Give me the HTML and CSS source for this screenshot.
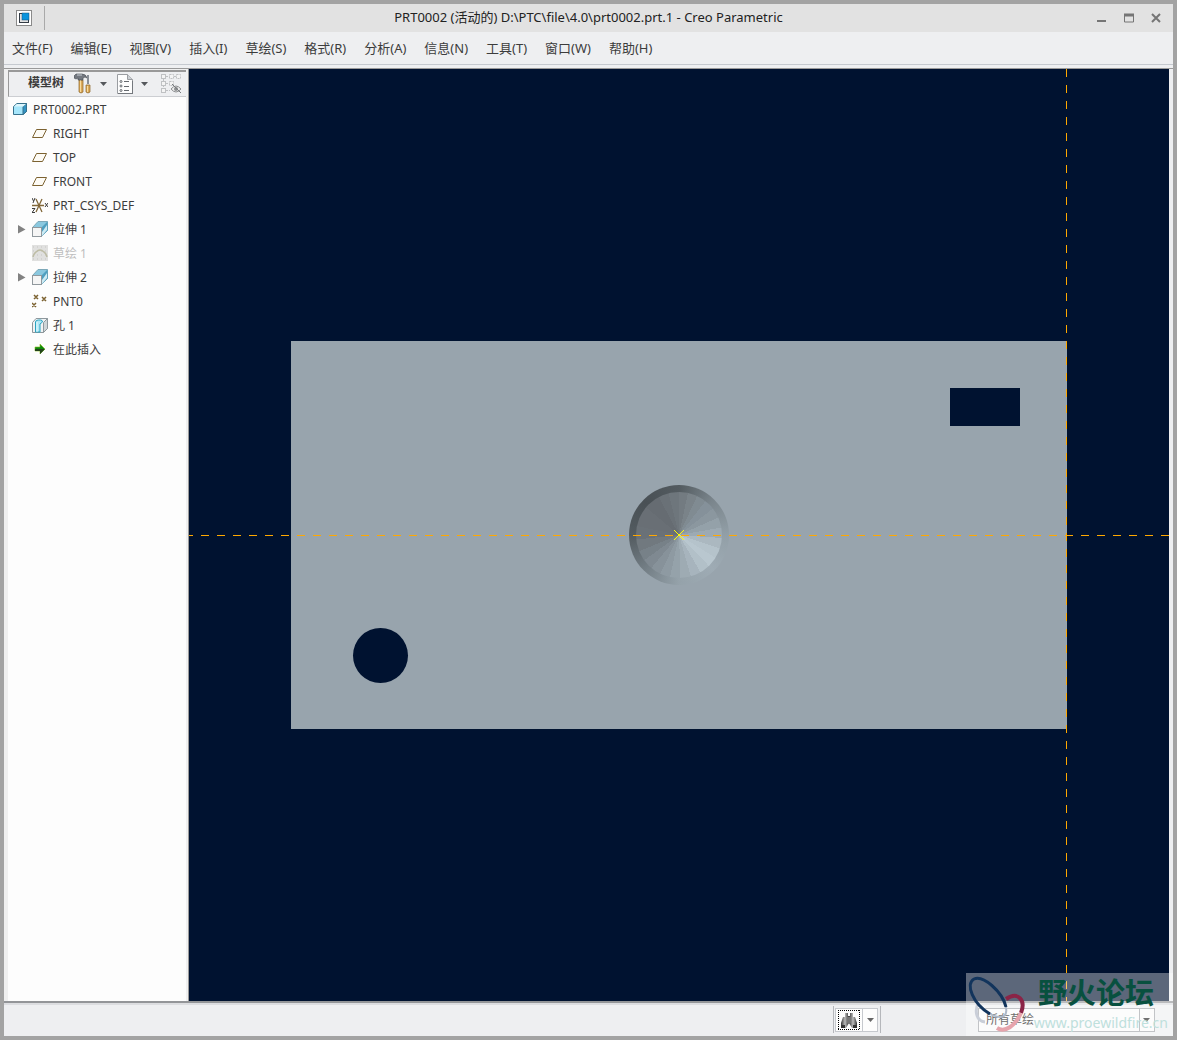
FILE: index.html
```
<!DOCTYPE html>
<html lang="zh-CN">

<head>
    <meta charset="UTF-8">
    <meta name="viewport" content="width=device-width, initial-scale=1.0">
    <title>PRT0002 - Creo Parametric</title>
    <link rel="stylesheet" href="styles.css">
</head>

<body>
    <div class="window">

        <header class="titlebar">
            <div class="app">
                <svg class="icon" width="16" height="16" viewBox="0 0 16 16">
                    <rect x="0.5" y="0.5" width="15" height="15" fill="#fff" stroke="#8a8a8a" />
                    <rect x="3.5" y="3.5" width="9" height="9" fill="#e2e2e2" stroke="#333b45" />
                    <rect x="6" y="3" width="7" height="7" fill="#0a94dd" stroke="#1b4f78" stroke-width="0.5" />
                </svg>
            </div>
            <h1 class="title">PRT0002 (活动的) D:\PTC\file\4.0\prt0002.prt.1 - Creo Parametric</h1>
            <div class="winbuttons">
                <button aria-label="最小化"><svg width="10" height="10" viewBox="0 0 10 10"><path d="M0 8h9" stroke="#757575" stroke-width="2" /></svg></button>
                <button aria-label="最大化"><svg width="10" height="10" viewBox="0 0 10 10"><path d="M.5 1v8h9V1" fill="none" stroke="#757575" /><path d="M0 2h10" stroke="#757575" stroke-width="3" /></svg></button>
                <button aria-label="关闭"><svg width="10" height="10" viewBox="0 0 10 10"><path d="M1 1l8 8M9 1l-8 8" stroke="#757575" stroke-width="2" /></svg></button>
            </div>
        </header>

        <nav class="menubar">
            <button>文件(F)</button>
            <button>编辑(E)</button>
            <button>视图(V)</button>
            <button>插入(I)</button>
            <button>草绘(S)</button>
            <button>格式(R)</button>
            <button>分析(A)</button>
            <button>信息(N)</button>
            <button>工具(T)</button>
            <button>窗口(W)</button>
            <button>帮助(H)</button>
        </nav>

        <main class="main">
            <aside class="sidebar">
                <div class="treebar">
                    <h2>模型树</h2>
                    <button class="drop" aria-label="设置">
                        <svg width="18" height="22" viewBox="0 0 18 22">
                            <path d="M5 7h4v12q-2 2-4 0z" fill="#dca95a" stroke="#8b6425" stroke-width="0.7" />
                            <path d="M6.5 7v12" stroke="#f8dc9e" />
                            <path d="M0 3l2-2h6q4 0 5 4l-2-1-2 1v2H4V5L2 6 0 5z" fill="#737880" stroke="#454950" stroke-width="0.6" />
                            <path d="M3 2h5" stroke="#c9ced4" />
                            <path d="M13 2h2v9h-2z" fill="#888e96" />
                            <path d="M12 12h4v7q-2 2-4 0z" fill="#dca95a" stroke="#8b6425" stroke-width="0.7" />
                            <path d="M13.5 13v6" stroke="#f8dc9e" />
                        </svg>
                        <svg class="caret" width="7" height="4" viewBox="0 0 7 4"><path d="M0 0h7L3.500 4z" fill="#55585c" /></svg>
                    </button>
                    <button class="drop" aria-label="显示">
                        <svg width="16" height="20" viewBox="0 0 16 20">
                            <path d="M.5.500h10l5 5v14H.500z" fill="#fdfdfd" stroke="#9a9da1" />
                            <path d="M10.500.500v5h5" fill="#ccd0d4" stroke="#9a9da1" />
                            <path d="M1 19.500h15M15.500 7v12" stroke="#74787d" />
                            <g fill="none" stroke="#65696e">
                                <circle cx="4" cy="7.500" r="1" />
                                <circle cx="4" cy="12" r="1" />
                                <circle cx="4" cy="16.500" r="1" />
                                <path d="M7 7.500h5M7 12.500h5M7 16.500h5" />
                            </g>
                        </svg>
                        <svg class="caret" width="7" height="4" viewBox="0 0 7 4"><path d="M0 0h7L3.500 4z" fill="#55585c" /></svg>
                    </button>
                    <button class="hide" aria-label="隐藏" disabled>
                        <svg width="20" height="20" viewBox="0 0 20 20">
                            <g fill="#f4f4f4" stroke="#bfc1c3">
                                <path d="M2.500 5v10M5 2.500h4M5 9.500h4M5 16.500h4M13 2.500h2" stroke-dasharray="2 1" />
                                <rect x=".5" y=".5" width="4" height="4" />
                                <rect x=".5" y="7.500" width="4" height="4" />
                                <rect x=".5" y="14.500" width="4" height="4" />
                                <path d="M8.500.500h4v4h-4zM15.500.500h4v4h-4zM8.500 7.500h4v4h-4z" stroke-dasharray="2 1" />
                            </g>
                            <path d="M10 15q5-6 10 0-5 6-10 0z" fill="#ececec" stroke="#8d8f91" />
                            <circle cx="15" cy="15" r="2" fill="#8d8f91" />
                            <path d="M11 10l9 9" stroke="#777a7d" />
                        </svg>
                    </button>
                </div>

                <ul class="tree">
                    <li class="root">
                        <svg width="16" height="16" viewBox="0 0 16 16">
                            <path d="M1.500 5.500L5 2.500h9.500v8L11 13.500H1.500z" fill="#a6e6fb" stroke="#37718c" />
                            <path d="M11 5.500l3.500-3v8l-3.500 3z" fill="#3394c4" stroke="#37718c" />
                            <path d="M2 5.500L5 3h9l-3 2.500z" fill="#dcf6fd" />
                        </svg>
                        PRT0002.PRT
                    </li>
                    <li>
                        <svg width="16" height="16" viewBox="0 0 16 16"><path d="M4.500 4.500h10l-4 8H.500z" fill="#fdfbf5" stroke="#7c6231" /></svg>
                        RIGHT
                    </li>
                    <li>
                        <svg width="16" height="16" viewBox="0 0 16 16"><path d="M4.500 4.500h10l-4 8H.500z" fill="#fdfbf5" stroke="#7c6231" /></svg>
                        TOP
                    </li>
                    <li>
                        <svg width="16" height="16" viewBox="0 0 16 16"><path d="M4.500 4.500h10l-4 8H.500z" fill="#fdfbf5" stroke="#7c6231" /></svg>
                        FRONT
                    </li>
                    <li>
                        <svg width="16" height="16" viewBox="0 0 16 16">
                            <path d="M0 8.500h12M4 2l6 13M10 2L4 15" stroke="#82683a" stroke-width="1.300" fill="none" />
                            <path d="M0 1l1.500 3M3 1L1 6M0 11.500h3l-3 4h3M13 6l3 4M16 6l-3 4" stroke="#3d3d3d" fill="none" />
                        </svg>
                        PRT_CSYS_DEF
                    </li>
                    <li>
                        <svg class="expand" width="8" height="10" viewBox="0 0 8 10"><path d="M0 1v8.500l7.500-4z" fill="#828282" /></svg>
                        <svg width="16" height="16" viewBox="0 0 16 16">
                            <path d="M.5 6.500L6 .500h9.500v9L9.500 15.500v-9z" fill="#8ac8df" stroke="#7da8b8" />
                            <path d="M9.500 6.500l6-6v9l-6 6z" fill="#4f9fc0" />
                            <path d="M10 15l5-6V4l-5 7z" fill="#cdebf4" />
                            <rect x=".5" y="6.500" width="9" height="9" fill="#f5f5f5" stroke="#90989d" />
                        </svg>
                        拉伸 1
                    </li>
                    <li class="off">
                        <svg width="16" height="16" viewBox="0 0 16 16">
                            <rect width="16" height="16" fill="#e0e0df" />
                            <path d="M1 2h15M1 6h15M1 10h15M1 14h15" stroke="#c5c5c2" stroke-dasharray="1 3" />
                            <path d="M1 12q1-4 3-5 4-4 8 0 2 1 3 5" fill="none" stroke="#bdbca5" stroke-width="1.500" />
                        </svg>
                        草绘 1
                    </li>
                    <li>
                        <svg class="expand" width="8" height="10" viewBox="0 0 8 10"><path d="M0 1v8.500l7.500-4z" fill="#828282" /></svg>
                        <svg width="16" height="16" viewBox="0 0 16 16">
                            <path d="M.5 6.500L6 .500h9.500v9L9.500 15.500v-9z" fill="#8ac8df" stroke="#7da8b8" />
                            <path d="M9.500 6.500l6-6v9l-6 6z" fill="#4f9fc0" />
                            <path d="M10 15l5-6V4l-5 7z" fill="#cdebf4" />
                            <rect x=".5" y="6.500" width="9" height="9" fill="#f5f5f5" stroke="#90989d" />
                        </svg>
                        拉伸 2
                    </li>
                    <li>
                        <svg width="16" height="16" viewBox="0 0 16 16"><path d="M2 2l4 4M6 2L2 6M10 4l4 4M14 4l-4 4M0 10l4 4M4 10l-4 4" stroke="#7c6231" stroke-width="1.500" /></svg>
                        PNT0
                    </li>
                    <li>
                        <svg width="16" height="16" viewBox="0 0 16 16">
                            <path d="M.5 5.500L4 1.500h11.500v10l-4 4H.500z" fill="#f1f3f4" stroke="#8e989d" />
                            <path d="M11.500 5.500l4-4v10l-4 4z" fill="#cfd5d8" stroke="#8e989d" />
                            <path d="M3.500 15V5q0-2 3-2h2q2 0 2 2L8 7v8z" fill="#aee6f5" stroke="#2aa2c0" />
                            <path d="M5 15V5" stroke="#e6fafd" />
                        </svg>
                        孔 1
                    </li>
                    <li>
                        <svg width="16" height="16" viewBox="0 0 16 16">
                            <path d="M3 6h5V3l5 5-5 5v-3H3z" fill="#0c8a0c" stroke="#8bbd22" stroke-width="0.600" />
                            <path d="M3 8h10l-5 5v-3H3z" fill="#23431a" />
                        </svg>
                        在此插入
                    </li>
                </ul>
            </aside>

            <section class="canvas">
                <div class="plate">
                    <div class="pocket"></div>
                    <div class="drill"></div>
                    <div class="hole">
                        <div class="cone"></div>
                    </div>
                    <div class="axis-v"></div>
                </div>
                <div class="axis-h"></div>
                <svg class="point" width="10" height="10" viewBox="0 0 10 10"><path d="M0 0l10 10M10 0L0 10" stroke="#ffff00" /></svg>
            </section>
        </main>

        <footer class="status">
            <div class="search">
                <button class="find" aria-label="查找">
                    <svg width="22" height="20" viewBox="0 0 22 20">
                        <defs>
                            <linearGradient id="tube">
                                <stop offset="0" stop-color="#333" />
                                <stop offset="0.500" stop-color="#bbb" />
                                <stop offset="1" stop-color="#333" />
                            </linearGradient>
                        </defs>
                        <path d="M0 .500h22M0 19.500h22M.5 0v20M21.500 0v20" stroke="#000" stroke-dasharray="1 1" />
                        <path d="M7 3h3v3h1v7l-3 5H3v-5l2-6h2z" fill="url(#tube)" />
                        <path d="M12 3h3v4h2l2 6v5h-5l-3-5V6h1z" fill="url(#tube)" />
                        <path d="M9 7h4v6H9z" fill="#777" />
                        <path d="M3 15h4v3H3zM15 15h4v3h-4z" fill="#333" />
                    </svg>
                </button>
                <button class="more" aria-label="更多">
                    <svg width="7" height="4" viewBox="0 0 7 4"><path d="M0 0h7L3.500 4z" fill="#666" /></svg>
                </button>
            </div>
            <div class="filter">
                <select aria-label="过滤器">
                    <option>所有草绘</option>
                </select>
                <svg width="7" height="4" viewBox="0 0 7 4"><path d="M0 0h7L3.500 4z" fill="#222" /></svg>
            </div>
        </footer>

        <!-- forum logo over the bottom right corner -->
        <div class="forum">
            <svg width="64" height="63" viewBox="0 0 64 63">
                <g fill="none">
                    <path d="M13 29c-5 8-3 19 6 20" stroke="#c9ced8" stroke-width="3" />
                    <path d="M20 39q12 7 18 4 4-3 1-13" stroke="#aeb9c9" stroke-width="2" />
                    <path d="M40 34C36 18 17 2 8 6-1 11 7 31 24 41" stroke="#12345c" stroke-width="3" />
                    <path d="M40 26c12-8 20 1 15 14" stroke="#8b2447" stroke-width="4" />
                    <path d="M55 40C49 53 39 60 31 55" stroke="#e6a4ac" stroke-width="4" />
                </g>
            </svg>
            <div class="forum-text">
                <strong>野火论坛</strong>
                <span>www.proewildfire.cn</span>
            </div>
        </div>

    </div>
</body>

</html>
```
FILE: styles.css
```
* {
    box-sizing: border-box;
}

body {
    margin: 0;
    font-family: "Noto Sans", "Noto Sans CJK SC", sans-serif;
    font-size: 12px;
    color: #3c3c3c;
}

button {
    display: flex;
    align-items: center;
    justify-content: center;
    padding: 0;
    border: 0;
    background: none;
    font: inherit;
    color: inherit;
}

svg {
    display: block;
    flex: none;
}

.window {
    position: relative;
    display: flex;
    flex-direction: column;
    height: 100vh;
    border: 4px solid #a3a3a3;
    background: #eeeff1;
}

/* title bar */

.titlebar {
    display: grid;
    grid-template-columns: 1fr auto 1fr;
    align-items: center;
    height: 28px;
    background: #e2e2e2;
}

.app {
    display: flex;
    align-items: center;
    width: 41px;
    height: 24px;
    padding-left: 12px;
    border-right: 1px solid #a9a9a9;
}

.title {
    margin: 0;
    padding-bottom: 2px;
    font-size: 13px;
    line-height: 20px;
    font-weight: normal;
    color: #222;
}

.winbuttons {
    display: flex;
    justify-content: flex-end;
    gap: 17px;
    padding-right: 12px;
}

/* menu */

.menubar {
    display: flex;
    gap: 18px;
    height: 33px;
    padding: 0 8px;
    border-bottom: 1px solid #c5c9cf;
    font-size: 13px;
    line-height: 20px;
}

.main {
    display: flex;
    flex: 1;
    min-height: 0;
    margin-top: 3px;
    padding-right: 4px;
    border-top: 1px solid #999;
    border-bottom: 2px solid #939598;
}

/* model tree */

.sidebar {
    width: 185px;
    padding: 1px 2px 0 4px;
    border-right: 1px solid #999;
    display: flex;
    flex-direction: column;
    background: #f0f0f0;
}

.treebar {
    display: flex;
    align-items: center;
    height: 27px;
    padding-left: 19px;
    border-top: 2px solid #999;
    border-left: 1px solid #999;
    border-bottom: 1px solid #ccced2;
    background: #eeeff1;
}

.treebar h2 {
    margin: 0 10px 0 0;
    padding-bottom: 2px;
    font-size: 12px;
    line-height: 20px;
}

.drop {
    gap: 8px;
    margin-right: 10px;
}

.hide {
    margin-left: 3px;
}

.tree {
    flex: 1;
    margin: 0;
    padding: 0;
    list-style: none;
    background: #fdfdfd;
}

.tree li {
    display: flex;
    align-items: center;
    gap: 5px;
    height: 24px;
    padding-left: 24px;
    white-space: nowrap;
}

.tree .root {
    padding-left: 4px;
}

.tree .expand {
    margin-left: -14px;
    margin-right: 1px;
}

.tree .off {
    color: #bdbdbd;
}

/* graphics area */

.canvas {
    position: relative;
    display: flex;
    flex: 1;
    align-items: center;
    justify-content: center;
    overflow: hidden;
    background: #001230;
}

.plate {
    position: relative;
    flex: none;
    width: 776px;
    height: 388px;
    background: #98a4ad;
}

.pocket {
    position: absolute;
    top: 47px;
    right: 47px;
    width: 70px;
    height: 38px;
    background: #001230;
}

.drill {
    position: absolute;
    left: 62px;
    bottom: 46px;
    width: 55px;
    height: 55px;
    border-radius: 50%;
    background: #001230;
}

.hole {
    position: absolute;
    top: 144px;
    left: 338px;
    width: 100px;
    height: 100px;
    padding: 7px;
    border-radius: 50%;
    background: conic-gradient(#535b60, #7b868d 45deg, #929fa7 90deg, #9eabb4 135deg, #95a2aa 180deg, #737e85 225deg, #535b60 270deg, #495055 315deg, #535b60);
}

.cone {
    height: 100%;
    border-radius: 50%;
    background: conic-gradient(#737b81 0 12deg, #7a8389 12deg 25deg, #808b92 25deg 38deg, #85919a 38deg 52deg, #8b979f 52deg 66deg, #94a1a9 66deg 80deg, #9daab3 80deg 94deg, #abb8c0 94deg 108deg, #b5c3cb 108deg 122deg, #b9c7cf 122deg 136deg, #b2c0c8 136deg 150deg, #a7b4bd 150deg 164deg, #9eabb3 164deg 178deg, #95a2aa 178deg 192deg, #8e9aa2 192deg 206deg, #87929a 206deg 220deg, #7f8991 220deg 234deg, #778188 234deg 248deg, #71797f 248deg 264deg, #6a7177 264deg 282deg, #696f75 282deg 310deg, #666c72 310deg 332deg, #6a7177 332deg 346deg, #6e767c 346deg);
}

.axis-h {
    position: absolute;
    top: 50%;
    left: 0;
    right: 0;
    height: 1px;
    background: repeating-linear-gradient(90deg, #ffa800 0 4px, transparent 4px 12px, #ffa800 12px 16px);
}

.axis-v {
    position: absolute;
    top: -272px;
    bottom: -272px;
    right: 0;
    width: 1px;
    background: repeating-linear-gradient(#ffa800 0 8px, transparent 8px 16px);
}

.point {
    position: absolute;
}

/* status bar */

.status {
    display: flex;
    align-items: center;
    justify-content: flex-end;
    gap: 97px;
    height: 33px;
    padding: 0 18px 2px 0;
    border-top: 2px solid #dcdde0;
}

.search {
    display: flex;
    align-items: center;
    height: 27px;
    padding: 0 2px 0 1px;
    border-left: 1px solid #b5b7bb;
    border-right: 1px solid #b5b7bb;
}

.find,
.more {
    height: 24px;
    border: 1px solid #c6c9ce;
    background: #fdfdfd;
}

.find {
    width: 28px;
}

.more {
    width: 15px;
    border-left: 0;
}

.filter {
    position: relative;
    width: 177px;
    height: 24px;
}

.filter select {
    width: 100%;
    height: 100%;
    padding: 0 7px;
    border: 1px solid #a0a3a8;
    border-radius: 0;
    appearance: none;
    background: linear-gradient(#a0a3a8, #a0a3a8) right 14px top / 1px 100% no-repeat #fafafa;
    font: inherit;
    color: #111;
}

.filter svg {
    position: absolute;
    top: 10px;
    right: 5px;
}

/* forum logo */

.forum {
    position: absolute;
    right: 0;
    bottom: 0;
    display: flex;
    width: 207px;
    height: 63px;
    background: rgba(255, 255, 255, 0.36);
    pointer-events: none;
}

.forum-text {
    display: flex;
    flex-direction: column;
    align-items: flex-end;
    justify-content: space-between;
    flex: 1;
    padding: 0 5px 4px 0;
    white-space: nowrap;
}

.forum strong {
    margin-right: 14px;
    font-size: 29px;
    line-height: 40px;
    font-weight: bold;
    color: #08503f;
}

.forum span {
    font-size: 14px;
    line-height: 19px;
    color: #bfe0dc;
}
```
